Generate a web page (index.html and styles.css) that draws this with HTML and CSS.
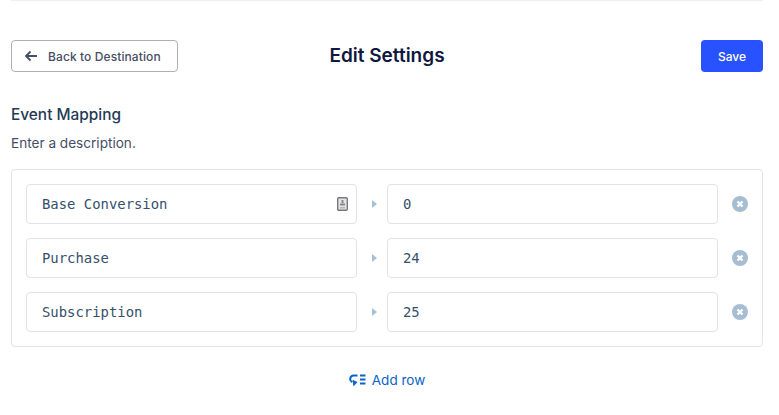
FILE: index.html
```html
<!DOCTYPE html>
<html lang="en">
<head>
    <meta charset="UTF-8">
    <title>Edit Settings</title>
    <link rel="stylesheet" href="styles.css">
</head>
<body>
<div class="page">
    <header class="top-bar">
        <button class="back-btn">
            <svg width="14" height="14" viewBox="0 0 14 14" fill="none" stroke="#474d66" stroke-width="1.8">
                <path d="M13 7H2M6.5 2.5 2 7l4.5 4.5"/>
            </svg>
            Back to Destination
        </button>
        <h1>Edit Settings</h1>
        <button class="save-btn">Save</button>
    </header>

    <h2>Event Mapping</h2>
    <p class="description">Enter a description.</p>

    <div class="mapping-box">
        <div class="mapping-row">
            <div class="field">
                <span>Base Conversion</span>
                <svg class="field-icon" width="11" height="14" viewBox="0 0 11 14">
                    <rect x="0.7" y="0.7" width="9.6" height="12.6" rx="1" fill="#e4e4e4" stroke="#77797c" stroke-width="1.4"/>
                    <path d="M4.5 3h2v3h-2zM3 6.5h5v2H3z" fill="#85878a"/>
                    <path d="M3 10h5v1.5H3z" fill="#b5b6b8"/>
                </svg>
            </div>
            <span class="arrow"></span>
            <div class="field"><span>0</span></div>
            <span class="remove">
                <svg width="16" height="16" viewBox="0 0 16 16">
                    <circle cx="8" cy="8" r="8" fill="#a7bdd1"/>
                    <path d="m5.5 5.5 5 5m0-5-5 5" stroke="#fff" stroke-width="2.2"/>
                </svg>
            </span>
        </div>
        <div class="mapping-row">
            <div class="field"><span>Purchase</span></div>
            <span class="arrow"></span>
            <div class="field"><span>24</span></div>
            <span class="remove">
                <svg width="16" height="16" viewBox="0 0 16 16">
                    <circle cx="8" cy="8" r="8" fill="#a7bdd1"/>
                    <path d="m5.5 5.5 5 5m0-5-5 5" stroke="#fff" stroke-width="2.2"/>
                </svg>
            </span>
        </div>
        <div class="mapping-row">
            <div class="field"><span>Subscription</span></div>
            <span class="arrow"></span>
            <div class="field"><span>25</span></div>
            <span class="remove">
                <svg width="16" height="16" viewBox="0 0 16 16">
                    <circle cx="8" cy="8" r="8" fill="#a7bdd1"/>
                    <path d="m5.5 5.5 5 5m0-5-5 5" stroke="#fff" stroke-width="2.2"/>
                </svg>
            </span>
        </div>
    </div>

    <div class="add-row">
        <svg width="17" height="13" viewBox="0 0 17 13" fill="none" stroke="#0b63c5" stroke-width="2">
            <path d="M8.5 1.5H4.8a3.5 3.5 0 0 0-1.500 6.700"/>
            <path d="M3.5 5.800 8.5 8 4.500 12.500z" fill="#0b63c5" stroke="none"/>
            <path d="M11 1.500h5.500M11 5.500h5.500M11 9.500h5.500"/>
        </svg>
        Add row
    </div>
</div>
</body>
</html>
```

FILE: styles.css
```css
* {
    box-sizing: border-box;
    margin: 0;
    padding: 0;
}

body {
    background: white;
    font-family: Inter, sans-serif;
    color: #474d66;
}

.page {
    width: 752px;
    margin-left: 11px;
    border-top: 1px solid #f0f0f0;
    padding-top: 39px;
}

.top-bar {
    display: grid;
    grid-template-columns: 1fr auto 1fr;
    align-items: center;
    margin-bottom: 33px;
}

h1 {
    font-size: 19px;
    font-weight: 600;
    color: #101840;
    line-height: 32px;
}

button {
    height: 32px;
    border-radius: 4px;
    font-family: inherit;
    font-size: 12px;
    font-weight: 500;
}

.back-btn {
    display: flex;
    align-items: center;
    gap: 10px;
    width: 167px;
    padding-left: 12px;
    background: white;
    border: 1px solid #aeaeb8;
    color: #474d66;
    letter-spacing: 0.1px;
}

.save-btn {
    justify-self: end;
    width: 62px;
    background: #2952ff;
    border: none;
    color: white;
}

h2 {
    font-size: 15.4px;
    font-weight: 500;
    line-height: 20px;
    color: #1f3b57;
    margin-bottom: 8px;
}

.description {
    font-size: 13.6px;
    line-height: 20px;
    margin-bottom: 16px;
}

.mapping-box {
    display: flex;
    flex-direction: column;
    gap: 14px;
    height: 178px;
    padding: 14px;
    border: 1px solid #e1e3ea;
    border-radius: 4px;
}

.mapping-row {
    display: flex;
    align-items: center;
    height: 40px;
}

.field {
    display: flex;
    align-items: center;
    justify-content: space-between;
    width: 331px;
    height: 40px;
    padding: 0 8px 0 15px;
    border: 1px solid #e1e3ea;
    border-radius: 4px;
    font-family: "DejaVu Sans Mono", monospace;
    font-size: 13.9px;
    color: #35506a;
}

.arrow {
    width: 0;
    height: 0;
    margin: 0 10px 0 15px;
    border-left: 5px solid #a7c0d6;
    border-top: 4px solid transparent;
    border-bottom: 4px solid transparent;
}

.remove {
    display: flex;
    margin-left: 14px;
}

.add-row {
    display: flex;
    align-items: center;
    justify-content: center;
    gap: 6px;
    margin-top: 24px;
    font-size: 13.5px;
    line-height: 18px;
    color: #0b63c5;
}
```
